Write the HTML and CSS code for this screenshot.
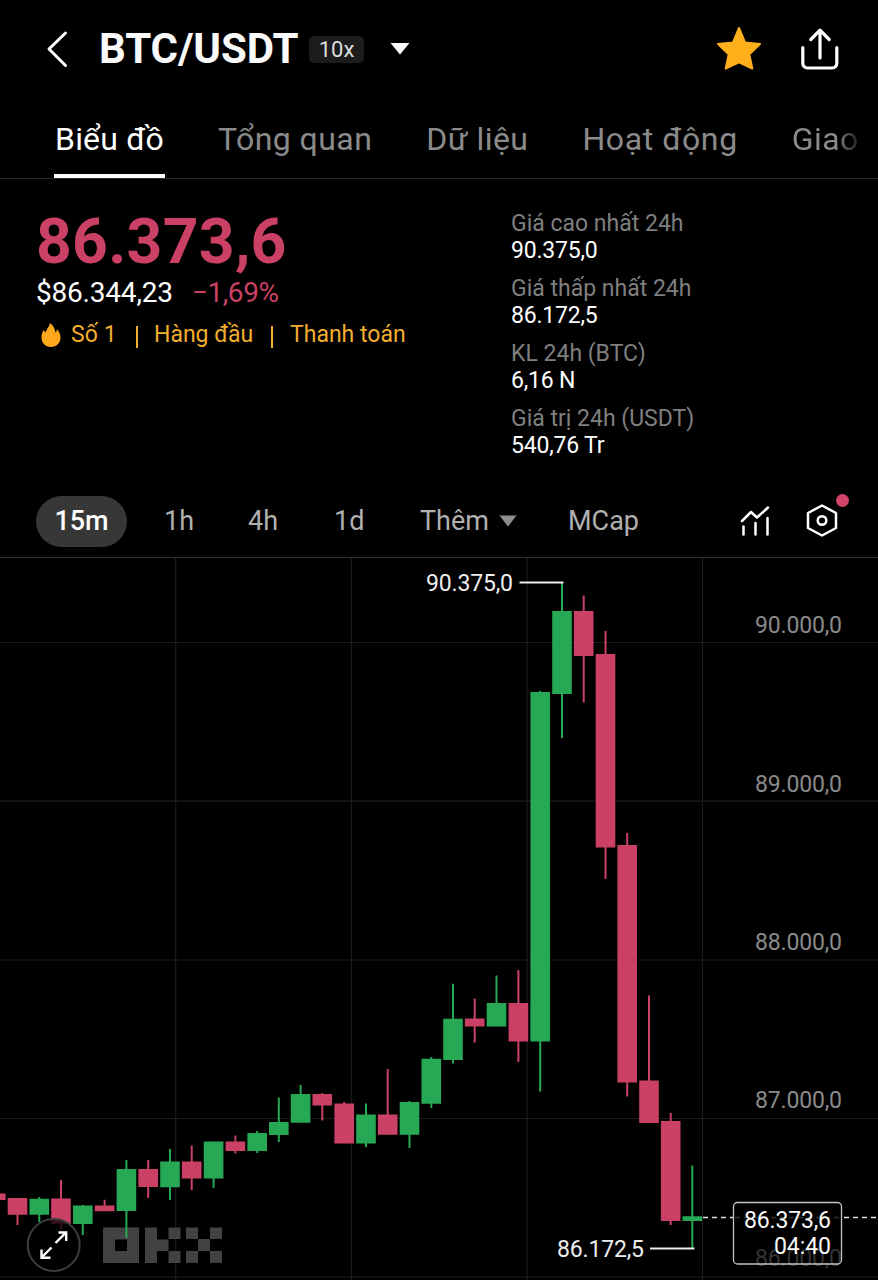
FILE: index.html
```
<!DOCTYPE html>
<html lang="vi">
<head>
<meta charset="utf-8">
<title>BTC/USDT</title>
<link rel="stylesheet" href="styles.css">
</head>
<body>
<header class="header">
  <svg class="back" width="22" height="38" viewBox="0 0 22 38"><path d="M19.500 3 3 19 19.500 35.500"/></svg>
  <h1 class="pair">BTC/USDT</h1>
  <span class="leverage">10x</span>
  <svg class="caret" width="22" height="14" viewBox="0 0 22 14"><path d="M1.500 1h19L11 12.500z"/></svg>
  <div class="header-actions">
    <svg class="favorite" width="46" height="46" viewBox="0 0 46 46"><path class="star" d="M23 3 29 17.500 44 19 33.300 29.300 36.300 43.500 23 37.300 9.700 43.500 12.700 29.300 2 19 17 17.500z"/></svg>
    <svg class="share" width="40" height="44" viewBox="0 0 40 44"><path d="M2.800 20.500V36.500a4.500 4.500 0 0 0 4.500 4.500h25a4.500 4.500 0 0 0 4.500-4.500V20.500M20 31V3.500M10.800 12.500 20 3.200 29.200 12.500"/></svg>
  </div>
</header>

<nav class="tabs">
  <a class="tab tab-active">Biểu đồ</a>
  <a class="tab">Tổng quan</a>
  <a class="tab">Dữ liệu</a>
  <a class="tab tab-activity">Hoạt động</a>
  <a class="tab tab-cut">Giao</a>
</nav>

<section class="summary">
  <div class="quote">
    <div class="price">86.373,6</div>
    <div class="fiat"><span>$86.344,23</span><span class="change">−1,69%</span></div>
    <div class="tags">
      <svg width="20" height="26" viewBox="0 0 20 26"><path d="M8.800 1C8.500 5 5.500 6.500 4.800 10.500 3.500 9.500 3 8.500 3 7.800 1 10.500.5 13 .5 15.500.5 21 4.500 25 10 25s9.500-4 9.500-9.500c0-3.500-1.700-6.500-3.700-8.500 0 1.700-.3 2.800-1.300 3.700C14 6.500 12 3 8.800 1z"/></svg>
      <span class="rank">Số 1</span><i class="bar"></i><span class="tag-top">Hàng đầu</span><i class="bar"></i><span class="tag-pay">Thanh toán</span>
    </div>
  </div>
  <dl class="stats">
    <div><dt>Giá cao nhất 24h</dt><dd>90.375,0</dd></div>
    <div><dt>Giá thấp nhất 24h</dt><dd>86.172,5</dd></div>
    <div><dt>KL 24h (BTC)</dt><dd>6,16 N</dd></div>
    <div><dt>Giá trị 24h (USDT)</dt><dd>540,76 Tr</dd></div>
  </dl>
</section>

<div class="toolbar">
  <button class="interval interval-active">15m</button>
  <button class="interval h1">1h</button>
  <button class="interval h4">4h</button>
  <button class="interval d1">1d</button>
  <button class="interval more">Thêm <svg width="18" height="12" viewBox="0 0 18 12"><path d="M.5.500h17L9 11.500z"/></svg></button>
  <button class="interval mcap">MCap</button>
  <div class="tools">
    <svg width="30" height="34" viewBox="0 0 30 34"><path d="M2 17 11 8l6 5.500L28 3.500M3.500 22.500V30.500M15.500 19V30.500M27.500 14V30.500"/></svg>
    <span class="settings">
      <svg width="32" height="36" viewBox="0 0 32 36"><path d="M16 2.500 30 10V25L16 32.500 2 25V10z"/><circle cx="16" cy="17.500" r="4.300"/></svg>
      <i class="dot"></i>
    </span>
  </div>
</div>

<main class="chart">
  <svg width="878" height="722" viewBox="0 558 878 722">
    <path class="grid" d="M0 642.500H878M0 801.200H878M0 960H878M0 1118.500H878M0 1277H878M175.700 558V1280M351.500 558V1280M527 558V1280M702.500 558V1280"/>

    <g class="watermark">
      <path fill-rule="evenodd" d="M103 1227.500h36v35.500h-36zM115 1239.500v11.500h12v-11.500z"/>
      <path d="M145 1227.500h12v12h11.500v11.500h-11.500v12h-12zM168.500 1227.500h12v11.500h-12zM168.500 1251h12v12h-12zM186 1227.500h12v11.500h-12zM210 1227.500h12v11.500h-12zM198 1239h12v12h-12zM186 1251h12v12h-12zM210 1251h12v12h-12z"/>
    </g>

    <path class="wick up" d="M39.300 1197V1222M82.800 1205V1235M126.400 1160V1238M170 1149V1200M213.600 1142V1188M257.200 1131V1153M278.800 1097.500V1142M300.600 1085V1122M366 1103.500V1147M409.500 1101V1148M431.300 1057V1108M453 983.700V1063.500M496.500 975.500V1026M540.200 691V1091.500M562 583V738M692.300 1165.500V1248"/>
    <path class="wick down" d="M17.500 1198V1225M61 1180V1229M104.600 1199.700V1211M148.200 1160V1198M191.700 1145.500V1190M235.400 1135.500V1153.500M322.300 1093V1120.500M344.200 1102V1143M387.700 1069V1134M474.700 998.500V1042.500M518.400 970V1062M583.700 595.500V702.500M605.500 631V879M627.200 833V1096.500M649 995.500V1123M670.700 1113V1225"/>
    <path class="body up" d="M39.300 1198.700V1214.700M82.800 1205.500V1224M126.400 1169V1211M170 1161.500V1187.300M213.600 1141.500V1178.500M257.200 1133V1151M278.800 1122V1135M300.600 1094V1122.700M366 1114.500V1143.500M409.500 1102V1134.800M431.300 1058.700V1103.700M453 1018.700V1060M496.500 1003V1026.500M540.200 692V1041.500M562 611V694M692.300 1216.300V1221"/>
    <path class="body down" d="M-4.200 1193.500V1200M17.500 1198V1214.700M61 1198.500V1223.700M104.600 1205.500V1211.300M148.200 1169V1187M191.700 1161.500V1178.500M235.400 1141.500V1151M322.300 1094V1105.500M344.200 1103.500V1143.500M387.700 1114.500V1134.800M474.700 1018.500V1026.500M518.400 1003V1041.500M583.700 611V656M605.500 654V847.500M627.200 845V1082.500M649 1080.500V1123M670.700 1121V1221"/>

    <g class="axis">
      <text x="755" y="632.500" textLength="87">90.000,0</text>
      <text x="755" y="791.500" textLength="87">89.000,0</text>
      <text x="755" y="949.500" textLength="87">88.000,0</text>
      <text x="755" y="1108" textLength="87">87.000,0</text>
      <text class="faded" x="755" y="1266" textLength="87">86.000,0</text>
    </g>

    <g class="extreme">
      <text x="426" y="591" textLength="87">90.375,0</text>
      <path d="M519.500 582.500H563.500M650 1248.500H694.500"/>
      <text x="557" y="1257" textLength="87">86.172,5</text>
    </g>

    <path class="last-line" d="M703 1217.500H733M844 1217.500H878"/>
    <path class="last-line last-line-dim" d="M735 1217.500H841"/>
    <rect class="last-box" x="733.500" y="1202.500" width="108" height="61.500" rx="4"/>
    <g class="last-text">
      <text x="744" y="1227.500" textLength="87">86.373,6</text>
      <text x="774" y="1254" textLength="57">04:40</text>
    </g>

    <g class="expand">
      <circle cx="53.700" cy="1245" r="26"/>
      <path d="M55.500 1243 66 1232.500M58.500 1232.500h7.700v8.500M51.500 1247.500 41.500 1257.500M41.500 1249.500v8.200H50.500"/>
    </g>
  </svg>
</main>
</body>
</html>
```
FILE: styles.css
```
* { box-sizing: border-box; }
body {
  margin: 0;
  width: 878px;
  height: 1280px;
  overflow: hidden;
  background: #000;
  color: #fff;
  font-family: Roboto, "Noto Sans", sans-serif;
}
svg { display: block; flex: none; }

.header {
  display: flex;
  align-items: center;
  height: 98px;
  padding: 0 36px 0 46px;
}
.back path { fill: none; stroke: #fff; stroke-width: 3; stroke-linecap: round; stroke-linejoin: round; }
.pair { margin: 0 0 0 31px; width: 210px; font-size: 42px; line-height: 48px; font-weight: 700; letter-spacing: -.1px; color: #fafafa; }
.leverage {
  width: 55px;
  height: 27px;
  border-radius: 5px;
  background: #1c1c1c;
  color: #ddd;
  font-size: 22px;
  line-height: 27px;
  text-align: center;
}
.caret { margin-left: 25px; fill: #fff; }
.header-actions { display: flex; align-items: center; gap: 38px; margin-left: auto; }
.favorite { margin-bottom: 2px; }
.star { fill: #ffb01b; stroke: #ffb01b; stroke-width: 2; stroke-linejoin: round; }
.share { margin-right: 2px; }
.share path { fill: none; stroke: #fff; stroke-width: 3.2; stroke-linecap: round; stroke-linejoin: round; }

.tabs {
  display: flex;
  gap: 54px;
  height: 81px;
  padding-left: 54px;
  border-bottom: 1px solid #262626;
}
.tab { height: 80px; font-size: 32px; line-height: 83px; white-space: nowrap; color: #8b8b8b; letter-spacing: .45px; }
.tab-active { width: 111px; margin-right: -1px; padding-left: 1px; color: #fff; border-bottom: 4px solid #fff; letter-spacing: .2px; }
.tab-activity { letter-spacing: .6px; }
.tab-cut { background: linear-gradient(90deg, #8b8b8b 65%, #1c1c1c 100%); background-clip: text; color: transparent; }

.summary { display: flex; height: 305px; padding: 31px 0 0 36px; }
.quote { width: 475px; padding-top: 7px; }
.price { font-size: 62.5px; line-height: 50px; font-weight: 700; letter-spacing: .25px; color: #cb4065; }
.fiat { display: flex; gap: 19px; margin-top: 8px; font-size: 28px; line-height: 36px; letter-spacing: -.2px; }
.change { color: #cb4065; letter-spacing: -.4px; }
.tags { display: flex; align-items: center; margin-top: 9px; padding-left: 5px; height: 30px; font-size: 23px; line-height: 30px; color: #f2ae2c; }
.tags svg { fill: #ffa81b; }
.rank { width: 75px; padding-left: 10px; letter-spacing: .1px; }
.bar { width: 2px; height: 22px; margin-top: 4px; background: #f2ae2c; }
.tag-top { width: 133px; padding-left: 16px; }
.tag-pay { padding-left: 17px; }
.stats { display: flex; flex-direction: column; gap: 11px; margin: 0; font-size: 23px; line-height: 27px; }
.stats dt { color: #7f7f7f; }
.stats dd { margin: 0; letter-spacing: -.2px; }

.toolbar {
  display: flex;
  align-items: center;
  height: 74px;
  padding: 1px 40px 0 36px;
  border-bottom: 1px solid #333;
}
.interval { height: 51px; padding: 0; border: 0; background: none; color: #b0b0b0; font: 27px/51px Roboto, sans-serif; text-align: left; }
.interval-active { width: 91px; border-radius: 26px; background: #373737; color: #fff; font-weight: 500; text-align: center; }
.h1 { width: 83px; padding-left: 37px; }
.h4 { width: 87px; padding-left: 38px; }
.d1 { width: 123px; padding-left: 37px; }
.more { display: flex; align-items: center; gap: 10px; width: 147px; }
.more svg { fill: #8e8e8e; }
.mcap { padding-left: 1px; }
.tools { display: flex; align-items: center; gap: 36px; margin-left: auto; }
.tools svg { fill: none; stroke: #fff; stroke-width: 2.5; stroke-linejoin: round; stroke-linecap: round; }
.settings { position: relative; }
.dot { position: absolute; top: -9px; right: -11px; width: 13px; height: 13px; border-radius: 50%; background: #d5436b; }

.chart { height: 722px; }
.chart text { font-size: 23px; }
.grid { fill: none; stroke: #1c1c1c; stroke-width: 1.2; }
.watermark { fill: #424242; }
.wick { fill: none; stroke-width: 2; }
.body { fill: none; stroke-width: 19.6; }
.up { stroke: #27a854; }
.down { stroke: #cb4065; }
.axis text { fill: #8a8a8a; }
.axis .faded { fill: #333; }
.extreme text { fill: #eee; }
.extreme path { fill: none; stroke: #eee; stroke-width: 2.2; }
.last-line { stroke: #ddd; stroke-width: 1.3; stroke-dasharray: 5 4; }
.last-line-dim { stroke: #333; }
.last-box { fill: none; stroke: #c4c4c4; stroke-width: 1.3; }
.last-text text { fill: #fafafa; }
.expand circle { fill: #000; fill-opacity: .75; stroke: #3d3d3d; stroke-width: 2; }
.expand path { fill: none; stroke: #fff; stroke-width: 2.4; }
```
